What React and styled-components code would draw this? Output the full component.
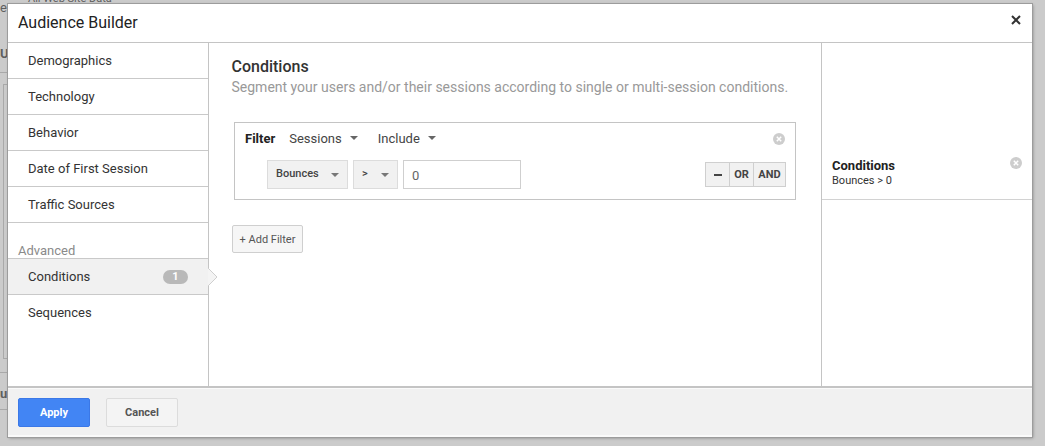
import React from 'react';
import styled, { createGlobalStyle } from 'styled-components';

const Global = createGlobalStyle`
    html, body { margin: 0; padding: 0; }
    body {
        width: 1045px;
        height: 446px;
        overflow: hidden;
        background: #cbcbcb;
        font-family: Roboto, "Liberation Sans", sans-serif;
        color: #333;
    }
    * { box-sizing: border-box; }
`;

const Page = styled.div`
    position: relative;
    width: 1045px;
    height: 446px;
    overflow: hidden;
`;

const GhostLabel = styled.span`
    position: absolute;
    left: ${p => p.$x}px;
    top: ${p => p.$y}px;
    font-size: ${p => p.$size || 13}px;
    font-weight: ${p => p.$bold ? 700 : 400};
    color: #5f5f5f;
    white-space: nowrap;
`;

const GhostBox = styled.div`
    position: absolute;
    left: 3px;
    top: 84px;
    width: 20px;
    height: 275px;
    border: 1px solid #a9a9a9;
`;

const GhostRule = styled.div`
    position: absolute;
    left: 0;
    top: ${p => p.$y}px;
    width: 8px;
    height: 1px;
    background: #a9a9a9;
`;

const Modal = styled.div`
    position: absolute;
    left: 8px;
    top: 4px;
    width: 1024px;
    height: 433px;
    display: flex;
    flex-direction: column;
    background: #fff;
    box-shadow: 0 0 0 1px #9c9c9c, 1px 1px 3px rgba(0, 0, 0, 0.35);
`;

const Header = styled.header`
    height: 39px;
    flex: none;
    display: flex;
    align-items: center;
    justify-content: space-between;
    padding: 0 10px 1px 10px;
    border-bottom: 1px solid #c4c4c4;
`;

const Title = styled.h1`
    margin: 0;
    font-size: 16px;
    font-weight: 400;
    color: #222;
`;

const CloseBtn = styled.svg`
    width: 10px;
    height: 10px;
    margin-top: -6px;
    margin-right: 1px;
`;

const Body = styled.div`
    flex: 1;
    min-height: 0;
    display: flex;
`;

const Sidebar = styled.nav`
    width: 201px;
    flex: none;
    border-right: 1px solid #c4c4c4;
    display: flex;
    flex-direction: column;
`;

const NavRow = styled.div`
    position: relative;
    height: 36px;
    flex: none;
    display: flex;
    align-items: center;
    justify-content: space-between;
    padding: 0 20px 0 20px;
    font-size: 13px;
    color: #333;
    border-bottom: 1px solid ${p => p.$plain ? 'transparent' : '#c9c9c9'};
    background: ${p => p.$active ? '#f1f1f1' : '#fff'};
`;

const GroupLabel = styled.div`
    height: 36px;
    flex: none;
    display: flex;
    align-items: flex-end;
    padding: 0 10px 0 10px;
    font-size: 13px;
    line-height: 15px;
    color: #8a8a8a;
    border-bottom: 1px solid #c9c9c9;
`;

const Count = styled.span`
    width: 25px;
    height: 14px;
    border-radius: 7px;
    background: #b9b9b9;
    color: #fff;
    font-size: 11px;
    font-weight: 700;
    display: flex;
    align-items: center;
    justify-content: center;
`;

const Pointer = styled.svg`
    position: absolute;
    right: -10px;
    top: 9px;
    width: 10px;
    height: 18px;
`;

const Main = styled.main`
    flex: 1;
    min-width: 0;
    padding: 14px 25px 0 23px;
`;

const SectionTitle = styled.h2`
    margin: 0 0 0 -0.5px;
    font-size: 16px;
    line-height: 19px;
    font-weight: 500;
    color: #333;
`;

const SectionHint = styled.p`
    margin: 2px 0 0 -0.5px;
    font-size: 14px;
    line-height: 18px;
    color: #999;
`;

const FilterCard = styled.div`
    position: relative;
    margin-top: 26px;
    margin-left: 2px;
    width: 562px;
    height: 78px;
    border: 1px solid #c4c4c4;
    padding: 0 9px 0 10px;
`;

const FilterTop = styled.div`
    height: 30px;
    display: flex;
    align-items: center;
    font-size: 13px;
    color: #444;
`;

const FilterLabel = styled.strong`
    font-weight: 700;
    color: #222;
    margin-right: 14px;
`;

const Drop = styled.span`
    display: flex;
    align-items: center;
    margin-right: 20px;
`;

const Caret = styled.span`
    width: 0;
    height: 0;
    margin-left: 8px;
    border-left: 4px solid transparent;
    border-right: 4px solid transparent;
    border-top: 4px solid #666;
`;

const RemoveIcon = styled.svg`
    position: absolute;
    right: ${p => p.$right}px;
    top: ${p => p.$top}px;
    width: 12px;
    height: 12px;
`;

const FilterRow = styled.div`
    display: flex;
    align-items: center;
    padding-left: 22px;
    margin-top: 7px;
`;

const GreySelect = styled.div`
    width: ${p => p.$w}px;
    height: 29px;
    margin-right: 5px;
    background: #f1f1f1;
    border: 1px solid #dcdcdc;
    display: flex;
    align-items: center;
    justify-content: space-between;
    padding: 0 8px 3px 8px;
    font-size: 11px;
    font-weight: 500;
    color: #444;

    ${Caret} {
        margin-top: 4px;
        border-top-color: #777;
    }
`;

const ValueInput = styled.div`
    width: 118px;
    height: 29px;
    border: 1px solid #cfcfcf;
    display: flex;
    align-items: center;
    padding: 2px 8px 0;
    font-size: 13px;
    color: #666;
`;

const Spacer = styled.div`
    flex: 1;
`;

const ButtonGroup = styled.div`
    display: flex;
    height: 25px;
    border: 1px solid #cfcfcf;
    background: #f1f1f1;
`;

const GroupBtn = styled.span`
    width: ${p => p.$w}px;
    display: flex;
    align-items: center;
    justify-content: center;
    font-size: 11px;
    font-weight: 700;
    color: #444;
    border-left: ${p => p.$first ? 'none' : '1px solid #cfcfcf'};
`;

const Minus = styled.span`
    width: 8px;
    height: 2px;
    margin-left: 1px;
    background: #444;
`;

const AddFilter = styled.button`
    display: block;
    margin-top: 25px;
    width: 71px;
    height: 28px;
    padding: 0;
    border: 1px solid #cfcfcf;
    border-radius: 2px;
    background: #f6f6f6;
    font-family: inherit;
    font-size: 11px;
    color: #555;
`;

const Summary = styled.aside`
    width: 211px;
    flex: none;
    border-left: 1px solid #c4c4c4;
`;

const SummaryItem = styled.div`
    position: relative;
    margin-top: 114px;
    height: 43px;
    padding: 1px 10px 0;
    border-bottom: 1px solid #d2d2d2;
`;

const SummaryTitle = styled.div`
    font-size: 13px;
    line-height: 15px;
    font-weight: 700;
    color: #222;
`;

const SummaryText = styled.div`
    font-size: 11px;
    line-height: 13px;
    color: #333;
    margin-top: 1px;
`;

const Footer = styled.footer`
    height: 51px;
    flex: none;
    display: flex;
    align-items: center;
    padding: 0 10px 1px;
    background: #f1f1f1;
    border-top: 2px solid #c4c4c4;
    box-shadow: inset 0 1px 0 #fafafa, inset 0 -2px 0 #fafafa;
`;

const Btn = styled.button`
    width: ${p => p.$w}px;
    height: 29px;
    margin-right: 16px;
    padding: 0;
    border-radius: 2px;
    font-family: inherit;
    font-size: 11px;
    font-weight: 700;
    color: ${p => p.$primary ? '#fff' : '#555'};
    background: ${p => p.$primary ? '#4285f4' : '#f4f4f4'};
    border: 1px solid ${p => p.$primary ? '#3b78e7' : '#dcdcdc'};
`;

const Remove = ({ right, top }) => (
    <RemoveIcon $right={right} $top={top} viewBox="0 0 12 12">
        <circle cx="6" cy="6" r="6" fill="#cdcdcd" />
        <path d="M3.8 3.8l4.4 4.4M8.2 3.8l-4.4 4.4" stroke="#fff" strokeWidth="1.5" />
    </RemoveIcon>
);

const navTop = ['Demographics', 'Technology', 'Behavior', 'Date of First Session', 'Traffic Sources'];

const App = () => {
    return (
        <Page>
            <Global />
            <GhostLabel $x={0} $y={0} $size={13}>e</GhostLabel>
            <GhostLabel $x={28} $y={-8} $size={11}>All Web Site Data</GhostLabel>
            <GhostLabel $x={0} $y={46} $size={13} $bold>U</GhostLabel>
            <GhostRule $y={72} />
            <GhostBox />
            <GhostRule $y={372} />
            <GhostLabel $x={0} $y={386} $size={13} $bold>u</GhostLabel>
            <GhostRule $y={409} />
            <Modal>
                <Header>
                    <Title>Audience Builder</Title>
                    <CloseBtn viewBox="0 0 10 10">
                        <path d="M1 1l8 8M9 1l-8 8" stroke="#333" strokeWidth="2" />
                    </CloseBtn>
                </Header>
                <Body>
                    <Sidebar>
                        {navTop.map(label => (
                            <NavRow key={label}>{label}</NavRow>
                        ))}
                        <GroupLabel>Advanced</GroupLabel>
                        <NavRow $active>
                            Conditions
                            <Count>1</Count>
                            <Pointer viewBox="0 0 10 18">
                                <path d="M0 0L9 9L0 18Z" fill="#f4f4f4" />
                                <path d="M0 0L9 9L0 18" fill="none" stroke="#cfcfcf" />
                            </Pointer>
                        </NavRow>
                        <NavRow $plain>Sequences</NavRow>
                    </Sidebar>
                    <Main>
                        <SectionTitle>Conditions</SectionTitle>
                        <SectionHint>Segment your users and/or their sessions according to single or multi-session conditions.</SectionHint>
                        <FilterCard>
                            <FilterTop>
                                <FilterLabel>Filter</FilterLabel>
                                <Drop>Sessions<Caret /></Drop>
                                <Drop>Include<Caret /></Drop>
                            </FilterTop>
                            <Remove right={10} top={10} />
                            <FilterRow>
                                <GreySelect $w={81}>Bounces<Caret /></GreySelect>
                                <GreySelect $w={45}>&gt;<Caret /></GreySelect>
                                <ValueInput>0</ValueInput>
                                <Spacer />
                                <ButtonGroup>
                                    <GroupBtn $w={23} $first><Minus /></GroupBtn>
                                    <GroupBtn $w={24}>OR</GroupBtn>
                                    <GroupBtn $w={32}>AND</GroupBtn>
                                </ButtonGroup>
                            </FilterRow>
                        </FilterCard>
                        <AddFilter>+ Add Filter</AddFilter>
                    </Main>
                    <Summary>
                        <SummaryItem>
                            <SummaryTitle>Conditions</SummaryTitle>
                            <SummaryText>Bounces &gt; 0</SummaryText>
                            <Remove right={10} top={0} />
                        </SummaryItem>
                    </Summary>
                </Body>
                <Footer>
                    <Btn $primary $w={72}>Apply</Btn>
                    <Btn $w={72}>Cancel</Btn>
                </Footer>
            </Modal>
        </Page>
    );
};

export default App;
